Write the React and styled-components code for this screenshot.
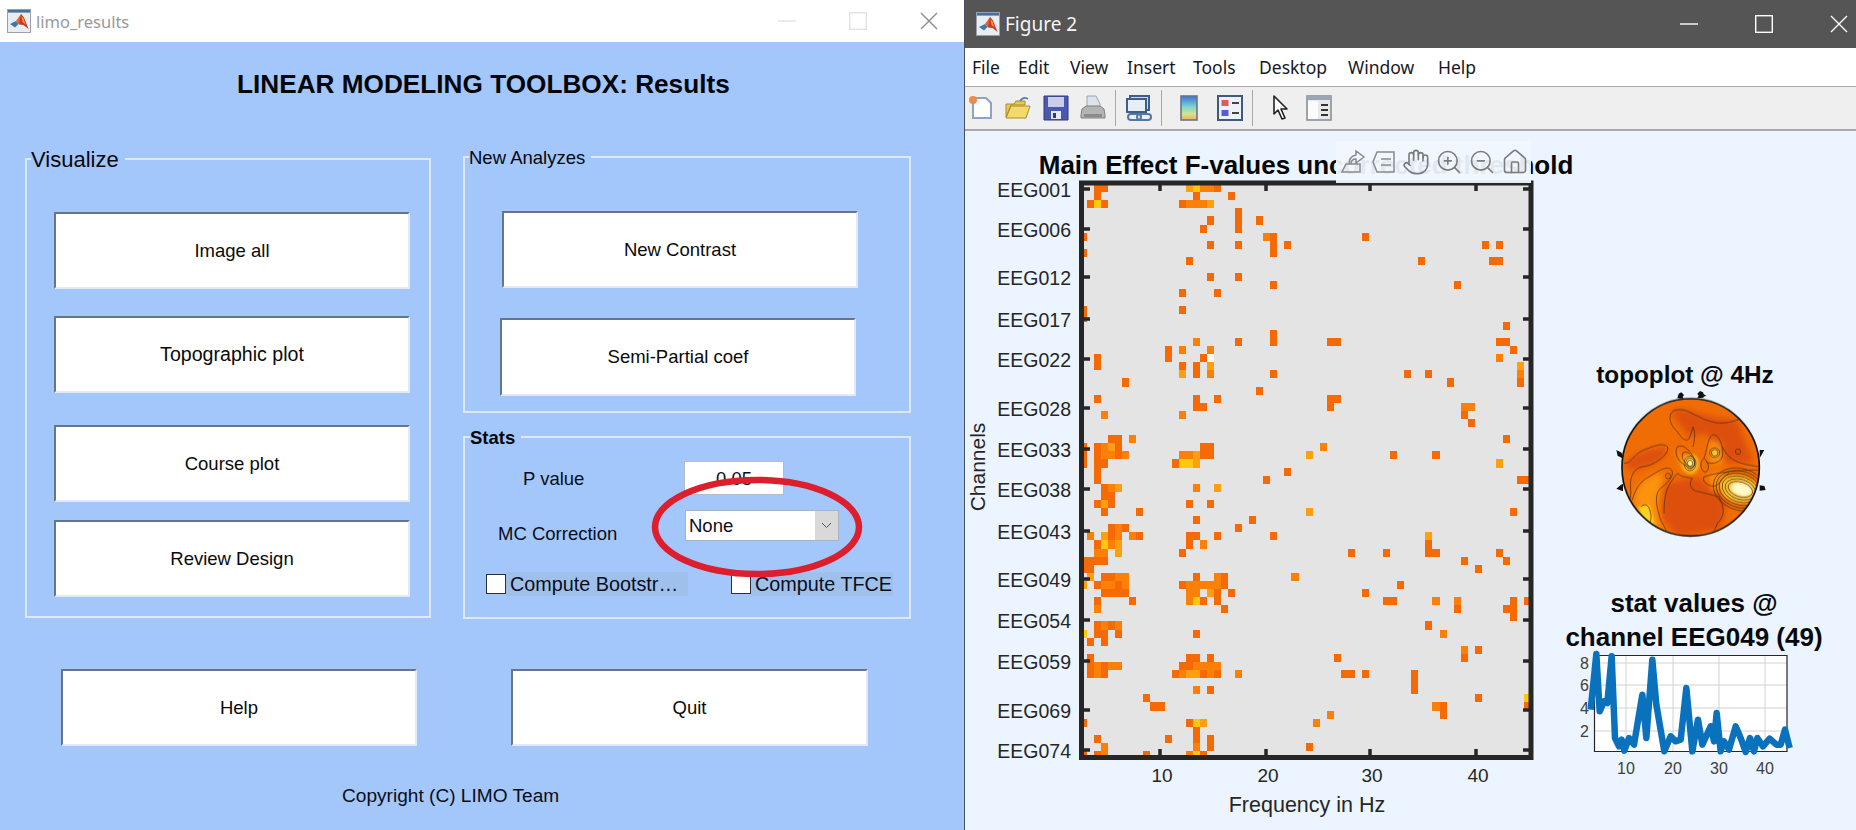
import React from 'react'
import styled, { createGlobalStyle } from 'styled-components'
import { Hand, ZoomIn, ZoomOut, House } from 'lucide-react'

const Global = createGlobalStyle`
  html, body { margin: 0; padding: 0; background: #fff; }
  * { box-sizing: border-box; }
`

const Screen = styled.div`
  display: flex;
  width: 1856px;
  height: 830px;
  overflow: hidden;
  font-family: "Liberation Sans", Arial, sans-serif;
`

/* ---------- window chrome ---------- */

const LeftWindow = styled.div`
  position: relative;
  display: flex;
  flex-direction: column;
  width: 964px;
  height: 830px;
  background: #a3c6fb;
`

const RightWindow = styled.div`
  display: flex;
  flex-direction: column;
  width: 892px;
  height: 830px;
  border-left: 1px solid #48505c;
  background: #ebf4ff;
`

const TitleBar = styled.div`
  display: flex;
  align-items: center;
  flex: none;
  height: ${p => p.$height}px;
  padding-left: ${p => p.$pad}px;
  background: ${p => p.$bg};
`

const WindowTitle = styled.span`
  margin-left: 5px;
  font-family: "Noto Sans", sans-serif;
  font-size: ${p => p.$size}px;
  color: ${p => p.$color};
`

const Controls = styled.div`
  display: flex;
  margin-left: auto;
  margin-right: ${p => p.$right}px;
  gap: ${p => p.$gap}px;
`

const ControlIcon = styled.svg`
  display: block;
  width: 18px;
  height: 18px;
  fill: none;
  stroke: ${p => p.$color};
  stroke-width: ${p => p.$w || 1.4};
`

const WinButtons = ({ colors, gap, right }) => (
  <Controls $gap={gap} $right={right}>
    <ControlIcon viewBox="0 0 18 18" $color={colors[0]}><path d="M0 9h18" /></ControlIcon>
    <ControlIcon viewBox="0 0 18 18" $color={colors[1]}><rect x="0.7" y="0.7" width="16.6" height="16.6" /></ControlIcon>
    <ControlIcon viewBox="0 0 18 18" $color={colors[2]}><path d="M1 1l16 16M17 1L1 17" /></ControlIcon>
  </Controls>
)

const MatlabIcon = () => (
  <svg width="24" height="24" viewBox="0 0 24 24">
    <rect x="0.5" y="0.5" width="23" height="23" fill="#e9edf2" stroke="#98a2ac" />
    <rect x="1" y="1" width="22" height="2.6" fill="#456f9f" />
    <path d="M3 15l6-3 2.5 3L8 18.5z" fill="#3f78a8" />
    <path d="M9 12l5-7 2 3-4 7.5z" fill="#e0662a" />
    <path d="M14 5l3 3.5 4.5 11.5-5-4-4.5-.5z" fill="#c8382a" />
    <path d="M14.5 7l2 2.5 2 6-3-2.5z" fill="#f09a3c" />
  </svg>
)

/* ---------- left window: limo_results ---------- */

const Heading = styled.h1`
  margin: 0;
  padding: 28px 0 0 237px;
  height: 116px;
  font-size: 26.2px;
  line-height: 28px;
  font-weight: 700;
  color: #05060a;
  white-space: nowrap;
`

const PanelRow = styled.div`
  display: flex;
  padding-left: 25px;
  gap: 32px;
`

const PanelColumn = styled.div`
  display: flex;
  flex-direction: column;
  gap: 23px;
  margin-top: -2px;
`

const Panel = styled.div`
  position: relative;
  width: ${p => p.$w}px;
  height: ${p => p.$h}px;
  border: 2px solid #dfe9f6;
  padding-left: ${p => p.$pad || 0}px;
`

const Legend = styled.span`
  position: absolute;
  left: ${p => p.$left}px;
  top: ${p => p.$top}px;
  padding-right: 6px;
  background: #a3c6fb;
  font-size: ${p => p.$size}px;
  font-weight: ${p => (p.$bold ? 700 : 400)};
  line-height: 26px;
  color: #06080e;
`

const PushButton = styled.button`
  display: block;
  width: ${p => p.$w || 356}px;
  height: ${p => p.$h || 77}px;
  margin-top: ${p => p.$top || 0}px;
  margin-left: ${p => p.$left || 0}px;
  padding: 0;
  background: #fff;
  border-style: solid;
  border-width: 2px;
  border-color: #66748e #e3e9f2 #e3e9f2 #66748e;
  border-radius: 0;
  font-family: inherit;
  font-size: ${p => p.$size || 18.5}px;
  color: #0a0a0a;
`

const StatRow = styled.div`
  display: flex;
  align-items: flex-start;
  height: ${p => p.$h}px;
  margin-top: ${p => p.$top}px;
  padding-left: ${p => p.$pad}px;
  font-size: 18.5px;
  color: #0a0e18;
`

const StatLabel = styled.span`
  width: ${p => p.$w}px;
  padding-top: ${p => p.$top}px;
  line-height: 24px;
`

const NumberField = styled.div`
  width: 100px;
  height: 34px;
  background: #fff;
  border: 1px solid #b4bcc8;
  text-align: center;
  line-height: 33px;
`

const SelectField = styled.div`
  display: flex;
  width: 154px;
  height: 31px;
  background: #fff;
  border: 1px solid #aab2be;
  line-height: 29px;
  padding-left: 3px;
`

const SelectArrow = styled.span`
  display: flex;
  align-items: center;
  justify-content: center;
  width: 23px;
  margin-left: auto;
  background: #d9d9d9;
`

const CheckItem = styled.label`
  display: flex;
  align-items: center;
  width: ${p => p.$w}px;
  margin-left: ${p => p.$left || 0}px;
  height: 24px;
`

const CheckBox = styled.span`
  flex: none;
  width: 20px;
  height: 20px;
  background: #fff;
  border: 1px solid #2c2f38;
`

const CheckText = styled.span`
  flex: 1;
  padding-left: 4px;
  background: #a0c0ec;
  font-size: 19.8px;
  line-height: 24px;
  white-space: nowrap;
  overflow: hidden;
`

const BottomRow = styled.div`
  display: flex;
  margin-top: 50px;
  padding-left: 61px;
  gap: 94px;
`

const Copyright = styled.div`
  margin-top: 38px;
  padding-left: 342px;
  font-size: 19.1px;
  line-height: 24px;
  color: #0a0e18;
`

const RedCircle = styled.svg`
  position: absolute;
  left: 648px;
  top: 472px;
  width: 220px;
  height: 110px;
  fill: none;
  stroke: #dc1e2d;
  stroke-width: 6.5px;
  pointer-events: none;
`

/* ---------- right window: Figure 2 ---------- */

const MenuBar = styled.div`
  display: flex;
  flex: none;
  align-items: center;
  height: 38px;
  padding-left: 7px;
  background: #fff;
  font-family: "Noto Sans", sans-serif;
  font-size: 17.5px;
  color: #14181f;
`

const MenuItem = styled.span`
  width: ${p => p.$w}px;
`

const ToolBar = styled.div`
  display: flex;
  flex: none;
  align-items: center;
  height: 45px;
  padding-left: 3px;
  background: #efefef;
  border-top: 1px solid #ababab;
  border-bottom: 2px solid #a8a8a8;
`

const ToolIcon = styled.svg`
  flex: none;
  width: 26px;
  height: 26px;
  margin-left: ${p => p.$left || 0}px;
`

const ToolSep = styled.span`
  flex: none;
  width: 1px;
  height: 36px;
  margin-left: ${p => p.$left}px;
  background: #a9a9a9;
`

const FigureBody = styled.div`
  position: relative;
  display: flex;
  flex: 1;
  min-height: 0;
`

const AxesToolbar = styled.div`
  position: absolute;
  left: 371px;
  top: 10px;
  display: flex;
  align-items: center;
  gap: 5px;
  width: 195px;
  height: 42px;
  padding-left: 4px;
  background: rgba(240, 246, 254, 0.94);
  color: #7c7c7c;
`

const HeatSvg = styled.svg`
  display: block;
  flex: none;
  overflow: visible;
`

const AxisText = styled.text`
  font-family: "Liberation Sans", Arial, sans-serif;
  font-size: ${p => p.$size}px;
  font-weight: ${p => (p.$bold ? 700 : 400)};
  fill: ${p => p.$color || '#262626'};
  text-anchor: ${p => p.$anchor || 'middle'};
`

const SideColumn = styled.div`
  display: flex;
  flex-direction: column;
  align-items: center;
  width: 270px;
  padding-top: 231px;
`

const PlotTitle = styled.div`
  font-size: ${p => p.$size}px;
  font-weight: 700;
  line-height: ${p => p.$line}px;
  margin-top: ${p => p.$top || 0}px;
  margin-bottom: ${p => p.$bottom || 0}px;
  margin-left: ${p => p.$shift || 0}px;
  text-align: center;
  white-space: nowrap;
  color: #08090c;
`

const TopoSvg = styled.svg`
  display: block;
  flex: none;
  width: 165px;
  height: 155px;
  margin-top: 2px;
  margin-left: -6px;
`

const StatSvg = styled.svg`
  display: block;
  flex: none;
  overflow: visible;
`

/* heat map cells, row -> columns, letter is how hot the cell is */
const HEAT = {
  1: '2 3 15b 16c 17a 18a 19', 2: '2 16 21', 3: '1 2c 3 14 15a 16a 17a 18b', 4: '22',
  5: '22 18 25', 6: '22 17', 7: '0 26a 27 40', 8: '18 22 27 29 57 59', 9: '0 27',
  10: '15 48 58 59', 12: '18 22', 13: '27 53', 14: '14 19', 16: '14 0', 17: '0', 18: '60',
  19: '27', 20: '27 16a 22 35 36 59 60', 21: '12 14a 18a 61', 22: '12 17 18w 2 59a',
  23: '2 14 16 18b 62b', 24: '14b 16 18a 27 46 49 62a', 25: '6 52 62', 26: '25',
  27: '2 16 19 35 36', 28: '16 17 35 54a 55a', 29: '3a 14a 54', 30: '55',
  32: '4 5 7a 60', 33: '0 2 3a 4b 5 17 18 34a', 34: '0 2 3a 4a 5 6a 14a 15a 16b 17 18 32b 44 50',
  35: '0 2 3 13 14c 15c 16b 59b', 36: '2 29', 37: '2 26 62 63', 38: '3 4a 5b 16a 19b',
  39: '3 4', 40: '2 3b 4 15 18', 41: '3 8 32b 61', 42: '16 24', 43: '4 5a 6 22',
  44: '1a 3b 4 5a 7a 8 15 16 19 27 49b', 45: '2 3c 4a 5b 15 17a 49',
  46: '2a 3a 5b 14 38 43 49 50 59', 47: '0 1 2 3 54 60', 48: '0 1 56',
  49: '1b 3 4 5a 6a 16 19a 20 30a', 50: '0b 2 3a 4a 5 6a 14 15a 16a 17a 18a 19a 20 45',
  51: '3 4 5 6 15a 16a 18b 19 21 40', 52: '2 7 15a 16c 17 19 43 44 50a 53a 61 63',
  53: '2a 20 53 60 61', 54: '61', 55: '2 3a 4 5a 49', 56: '0c 2 3 5 16 51a', 57: '1 3',
  58: '54a 56', 59: '1 15 16 18 36 54', 60: '1 2a 3 4a 5a 14 15 16a 17a 18a 19a',
  61: '1 2a 3 13 14a 15b 16b 17 18a 19 22a 37 38 40 47', 62: '47',
  63: '16a 18 47', 64: '9 56 63c', 65: '10 11 50a 51 63', 66: '35a 51',
  67: '0 15 16c 17b 33a', 68: '16', 69: '2 12 16 18', 70: '3a 16a 18 32', 71: '0 2 3a 9 15a 16c 17'
}
const HEAT_COLORS = { n: '#f56a05', a: '#fa8008', b: '#fd9f0e', c: '#ffc70f', w: '#fff9e6' }

const heatCells = Object.entries(HEAT).flatMap(([row, cols]) =>
  cols.split(' ').map(token => ({
    row: Number(row),
    col: parseInt(token, 10),
    color: HEAT_COLORS[token.replace(/\d/g, '') || 'n']
  }))
)

const CHANNELS = [
  ['EEG001', 190], ['EEG006', 230], ['EEG012', 278], ['EEG017', 320], ['EEG022', 360],
  ['EEG028', 409], ['EEG033', 450], ['EEG038', 490], ['EEG043', 532], ['EEG049', 580],
  ['EEG054', 621], ['EEG059', 662], ['EEG069', 711], ['EEG074', 751]
]
const FREQ_TICKS = [[1161, 10], [1267, 20], [1371, 30], [1477, 40]]

const HeatMap = () => (
  <HeatSvg width="594" height="699" viewBox="966 131 594 699">
    <defs>
      <clipPath id="heat-clip"><rect x="1085" y="185" width="445" height="570" /></clipPath>
    </defs>
    <AxisText x="1307" y="174" $size={26} $bold $color="#050505">Main Effect F-values uncorrected threshold</AxisText>
    <rect x="1085" y="185" width="445" height="570" fill="#e4e4e4" />
    <g clipPath="url(#heat-clip)" shapeRendering="crispEdges">
      {heatCells.map(c => (
        <rect
          key={`${c.row}-${c.col}`}
          x={1088 + 7.05 * (c.col - 1)}
          y={184 + 8.1 * (c.row - 1)}
          width="7.05"
          height="8.1"
          fill={c.color}
        />
      ))}
    </g>
    <rect x="1082.5" y="183" width="449.5" height="574.5" fill="none" stroke="#262626" strokeWidth="5" />
    {CHANNELS.map(([name, y]) => (
      <g key={name}>
        <path d={`M1085 ${y - 1}h6M1530 ${y - 1}h-6`} stroke="#262626" strokeWidth="3.5" />
        <AxisText x="1072" y={y + 7} $size={19.5} $anchor="end">{name}</AxisText>
      </g>
    ))}
    {FREQ_TICKS.map(([x, label]) => (
      <g key={label}>
        <path d={`M${x} 185v6M${x} 755v-6`} stroke="#262626" strokeWidth="3.5" />
        <AxisText x={x + 2} y="782" $size={19}>{label}</AxisText>
      </g>
    ))}
    <AxisText x="1308" y="812" $size={21.5}>Frequency in Hz</AxisText>
    <AxisText transform="translate(986 467) rotate(-90)" $size={21}>Channels</AxisText>
  </HeatSvg>
)

const Topoplot = () => (
  <TopoSvg viewBox="0 0 495 465">
    <defs>
      <clipPath id="head-clip"><circle cx="245" cy="232" r="204" /></clipPath>
      <filter id="soft"><feGaussianBlur stdDeviation="9" /></filter>
      <filter id="softer"><feGaussianBlur stdDeviation="4" /></filter>
    </defs>
    <g fill="#111">
      <path d="M205 25l4-14 8-4 8 8-4 6 2 6zM265 25l4-8-4-6 8-8 9 4 2 6 8 4-8 3-1 3z" />
      <path d="M22 180l16 8 4 18-10-6-6-2zM22 296l14-12 6-2 0 22-10-4zM452 180l14 0-8 14-6 10zM452 286l14 2 4 12-18 2z" />
    </g>
    <circle cx="245" cy="232" r="206" fill="#f06d05" />
    <g clipPath="url(#head-clip)">
      <g filter="url(#soft)" fill="#dd4f10">
        <path d="M185 65c30-25 60 10 200 25l50 130-85 0-60-90-50 10z" />
        <path d="M50 220c20-30 120-60 125-40 5 20-60 60-120 60z" />
        <path d="M165 280l100-20 90 70-20 90-130 20-50-60z" />
      </g>
      <g filter="url(#soft)" fill="#fb9310">
        <path d="M75 340c0-50 40-90 90-90l-20 90 10 100-70-30z" />
        <path d="M300 250l60 0-10 40-40 10z" />
        <path d="M200 180l50 40 10 30-40-10z" />
        <path d="M300 150l35 10 5 60-35 5z" />
      </g>
      <g filter="url(#softer)">
        <path d="M90 350l30-6 20 70-40-10z" fill="#ffd21e" />
        <ellipse cx="245" cy="222" rx="26" ry="30" fill="#fdb31a" />
        <ellipse cx="245" cy="220" rx="12" ry="14" fill="#fff28a" />
        <ellipse cx="392" cy="298" rx="60" ry="42" fill="#fcc433" transform="rotate(15 392 298)" />
        <ellipse cx="398" cy="298" rx="32" ry="20" fill="#fffac8" transform="rotate(15 398 298)" />
        <ellipse cx="318" cy="190" rx="12" ry="14" fill="#ffc43c" />
      </g>
      <g fill="none" stroke="#4a2a10" strokeWidth="2">
        <path d="M390 88c-30 10-65 22-120-8-30-12-40-25-70-20-25 8-20 40 0 60 15 15 18 30 34 30 8 0 12-20 18-40 8 20 5 40 0 60" />
        <path d="M45 220c25 0 30-30 60-40 20-8 55-25 70-10 10 15-30 55-75 60-25 5-40 30-35 70 2 25-5 40-15 50" />
        <path d="M70 330c10-40 30-60 50-70 25-15 60-40 70-15 5 20-30 45-40 55-15 20-5 60 5 90 10 20 20 30 30 75" />
        <path d="M205 170c-10 20 0 45 30 60 20 15 25-10 20-25-10-20-30-45-50-35z" />
        <path d="M222 188c-8 14 5 32 18 40 16 8 22-8 14-22-6-10-20-25-32-18z" />
        <ellipse cx="243" cy="220" rx="18" ry="22" />
        <ellipse cx="243" cy="220" rx="13" ry="16" />
        <ellipse cx="243" cy="220" rx="8" ry="10" />
        <path d="M285 205c8-20 10-60 25-70 20-5 35 35 30 65-5 20-40 25-50 15M285 205c-15 10-10 35 0 40 15 5 20-25 0-40z" />
        <circle cx="317" cy="188" r="10" />
        <circle cx="317" cy="188" r="15" />
        <circle cx="387" cy="185" r="8" />
        <circle cx="177" cy="258" r="8" />
        <path d="M340 170c15 30 30 50 110 60M450 240c-50 0-120 5-165 20-10 20 30 40 45 20 10-10 15-25 30-30" />
        <path d="M165 370c0-60 10-85 40-120 20 15 30 10 45 15-15 20 0 40 20 40l60 15c20 40 15 60-5 80-10 30-20 30-25 40" />
        <path d="M95 350c15-12 25-5 30 20 5 25-10 50-20 40" />
        {[0, 9, 18, 27, 36, 45].map(d => (
          <ellipse key={d} cx="394" cy="298" rx={38 + d} ry={22 + d * 0.9} transform="rotate(18 394 298)" />
        ))}
      </g>
    </g>
    <circle cx="245" cy="232" r="206" fill="none" stroke="#111" strokeWidth="5" />
  </TopoSvg>
)

const STAT_TRACE = [
  [155, 425], [172, 258], [182, 430], [195, 400], [205, 405], [218, 265], [228, 510], [240, 535], [248, 515],
  [256, 548], [270, 510], [285, 530], [310, 380], [322, 510], [340, 275], [352, 410], [376, 550], [395, 505],
  [410, 520], [425, 515], [442, 360], [460, 550], [477, 455], [490, 530], [515, 475], [525, 520], [533, 435],
  [545, 550], [555, 520], [570, 545], [590, 475], [605, 510], [620, 552], [633, 510], [645, 550], [655, 510],
  [672, 535], [692, 512], [712, 530], [725, 530], [738, 485], [752, 540]
]
const tracePoints = STAT_TRACE.map(([x, y]) => `${1540 + x / 3},${570 + y / 3}`).join(' ')
const STAT_X = [[1627, 10], [1674, 20], [1720, 30], [1766, 40]]
const STAT_Y = [[665, 8], [687, 6], [710, 4], [733, 2]]

const StatPlot = () => (
  <StatSvg width="270" height="140" viewBox="1560 650 270 140">
    <rect x="1595" y="657" width="193" height="96" fill="#fff" />
    <g stroke="#d2d2d2" strokeWidth="1">
      {STAT_X.map(([x]) => <path key={x} d={`M${x} 657v96`} />)}
      {STAT_Y.map(([y]) => <path key={y} d={`M1595 ${y}h193`} />)}
    </g>
    <path d="M1595.5 657v96.5h192.5V657.5H1595.5" fill="none" stroke="#262626" strokeWidth="1.2" />
    <polyline points={tracePoints} fill="none" stroke="#0a72bd" strokeWidth="6.5" strokeLinejoin="round" />
    {STAT_Y.map(([y, label]) => (
      <AxisText key={label} x="1590" y={y + 6} $size={16} $anchor="end" $color="#404040">{label}</AxisText>
    ))}
    {STAT_X.map(([x, label]) => (
      <AxisText key={label} x={x} y="776" $size={16} $color="#404040">{label}</AxisText>
    ))}
  </StatSvg>
)

const Chevron = () => (
  <svg width="11" height="7" viewBox="0 0 11 7" fill="none" stroke="#555" strokeWidth="1"><path d="M1 1l4.5 4.5L10 1" /></svg>
)

const ToolbarIcons = () => (
  <>
    <ToolIcon viewBox="0 0 26 26">
      <path d="M5 3h13l5 5v15H5z" fill="#fdfdfd" stroke="#8ea3bd" strokeWidth="2" />
      <circle cx="5" cy="5" r="4" fill="#ee8a4a" />
    </ToolIcon>
    <ToolIcon viewBox="0 0 26 26" $left={11}>
      <path d="M1 9h8l2-3h9v4H6L1 22z" fill="#e8c84e" stroke="#a88c30" />
      <path d="M1 23l5-12h19l-4 12z" fill="#f4d96b" stroke="#a88c30" />
      <path d="M15 6c2-3 5-4 8-2" fill="none" stroke="#5a7ea8" strokeWidth="1.6" />
    </ToolIcon>
    <ToolIcon viewBox="0 0 26 26" $left={12}>
      <path d="M1 1h24v24H1z" fill="#4a58b0" stroke="#2f3a80" />
      <rect x="5" y="2" width="16" height="10" fill="#c8cdea" />
      <rect x="8" y="16" width="10" height="8" fill="#e8e8f0" />
      <rect x="10" y="18" width="3" height="5" fill="#2f3a80" />
    </ToolIcon>
    <ToolIcon viewBox="0 0 26 26" $left={11}>
      <path d="M7 1h9l4 8v6H7z" fill="#dce3ea" stroke="#9aa6b2" />
      <path d="M2 14l4-3h14l4 3 1 6v3H1v-3z" fill="#b4b4b4" stroke="#808080" />
      <rect x="4" y="19" width="18" height="3" fill="#8c8c8c" />
    </ToolIcon>
    <ToolSep $left={9} />
    <ToolIcon viewBox="0 0 26 26" $left={10}>
      <rect x="4" y="1" width="19" height="14" fill="#cfdbe9" stroke="#3d5f8a" strokeWidth="2" />
      <rect x="1" y="4" width="19" height="13" fill="#e8eef5" stroke="#3d5f8a" strokeWidth="2" />
      <rect x="2" y="19" width="13" height="6" rx="3" fill="none" stroke="#4f78a8" strokeWidth="2" />
      <rect x="11" y="19" width="14" height="6" rx="3" fill="none" stroke="#4f78a8" strokeWidth="2" />
    </ToolIcon>
    <ToolSep $left={9} />
    <ToolIcon viewBox="0 0 26 26" $left={14}>
      <defs>
        <linearGradient id="cbar" x1="0" y1="0" x2="0" y2="1">
          <stop offset="0" stopColor="#3f6fd8" />
          <stop offset="0.45" stopColor="#7cd6d0" />
          <stop offset="0.75" stopColor="#d6e28a" />
          <stop offset="1" stopColor="#f2b060" />
        </linearGradient>
      </defs>
      <rect x="5" y="1" width="16" height="24" fill="url(#cbar)" stroke="#6a7688" strokeWidth="1.6" />
    </ToolIcon>
    <ToolIcon viewBox="0 0 26 26" $left={15}>
      <rect x="1" y="1" width="24" height="24" fill="#eef1f6" stroke="#3f5a80" strokeWidth="2" />
      <rect x="4.5" y="5" width="7" height="6" fill="#e05a5a" />
      <rect x="4.5" y="15" width="7" height="6" fill="#5a5ae0" />
      <path d="M15 8h7M15 18h7" stroke="#444" strokeWidth="2" />
    </ToolIcon>
    <ToolSep $left={9} />
    <ToolIcon viewBox="0 0 26 26" $left={13}>
      <path d="M8 1v18l4-4 4 9 3-1-4-9h6z" fill="#fdfdfd" stroke="#222" strokeWidth="1.6" strokeLinejoin="round" />
    </ToolIcon>
    <ToolIcon viewBox="0 0 26 26" $left={14}>
      <rect x="1" y="1" width="24" height="24" fill="#e6e8ea" stroke="#8a9098" strokeWidth="1.6" />
      <rect x="1" y="1" width="24" height="4" fill="#9aa6b4" />
      <rect x="2" y="6" width="10" height="18" fill="#fbfbfb" />
      <path d="M15 10h7M15 15h7M15 20h7" stroke="#333" strokeWidth="2" />
    </ToolIcon>
  </>
)

const AxesIcons = () => (
  <AxesToolbar>
    <svg width="26" height="26" viewBox="0 0 26 26" fill="none" stroke="#8a8a8a" strokeWidth="1.5">
      <path d="M2 23l4-8h14v8zM9 15c0-5 3-8 7-9V2l8 6-8 6v-4c-3 0-5 2-5 5" />
    </svg>
    <svg width="26" height="26" viewBox="0 0 26 26" fill="none" stroke="#8a8a8a" strokeWidth="1.5">
      <path d="M6 3h17v20H6l-4-10zM10 10h10M10 16h10" />
    </svg>
    <Hand size={28} strokeWidth={1.4} />
    <ZoomIn size={28} strokeWidth={1.4} />
    <ZoomOut size={28} strokeWidth={1.4} />
    <House size={28} strokeWidth={1.4} />
  </AxesToolbar>
)

export default function App() {
  return (
    <Screen>
      <Global />
      <LeftWindow>
        <TitleBar $height={42} $pad={7} $bg="#fff">
          <MatlabIcon />
          <WindowTitle $size={16.5} $color="#999">limo_results</WindowTitle>
          <WinButtons colors={['#e2e2e2', '#e2e2e2', '#8a8a8a']} gap={53} right={26} />
        </TitleBar>
        <Heading>LINEAR MODELING TOOLBOX: Results</Heading>
        <PanelRow>
          <Panel $w={406} $h={460} $pad={27}>
            <Legend $left={4} $top={-13} $size={22}>Visualize</Legend>
            <PushButton $top={52}>Image all</PushButton>
            <PushButton $top={27} $size={19.6}>Topographic plot</PushButton>
            <PushButton $top={32}>Course plot</PushButton>
            <PushButton $top={18}>Review Design</PushButton>
          </Panel>
          <PanelColumn>
            <Panel $w={448} $h={257}>
              <Legend $left={4} $top={-13} $size={18.5}>New Analyzes</Legend>
              <PushButton $top={53} $left={37}>New Contrast</PushButton>
              <PushButton $top={30} $left={35} $h={78}>Semi-Partial coef</PushButton>
            </Panel>
            <Panel $w={448} $h={183}>
              <Legend $left={5} $top={-13} $size={18.5} $bold>Stats</Legend>
              <StatRow $h={34} $top={23} $pad={58}>
                <StatLabel $w={161} $top={6}>P value</StatLabel>
                <NumberField>0.05</NumberField>
              </StatRow>
              <StatRow $h={31} $top={15} $pad={33}>
                <StatLabel $w={187} $top={12}>MC Correction</StatLabel>
                <SelectField>
                  None
                  <SelectArrow><Chevron /></SelectArrow>
                </SelectField>
              </StatRow>
              <StatRow $h={24} $top={31} $pad={21}>
                <CheckItem $w={202}>
                  <CheckBox />
                  <CheckText>Compute Bootstr…</CheckText>
                </CheckItem>
                <CheckItem $w={162} $left={43}>
                  <CheckBox />
                  <CheckText>Compute TFCE</CheckText>
                </CheckItem>
              </StatRow>
            </Panel>
          </PanelColumn>
        </PanelRow>
        <BottomRow>
          <PushButton>Help</PushButton>
          <PushButton $w={357}>Quit</PushButton>
        </BottomRow>
        <Copyright>Copyright (C) LIMO Team</Copyright>
        <RedCircle viewBox="0 0 220 110">
          <ellipse cx="109" cy="55" rx="102" ry="47" />
        </RedCircle>
      </LeftWindow>
      <RightWindow>
        <TitleBar $height={48} $pad={11} $bg="#555">
          <MatlabIcon />
          <WindowTitle $size={19} $color="#f6f6f6">Figure 2</WindowTitle>
          <WinButtons colors={['#fff', '#fff', '#fff']} gap={57} right={8} />
        </TitleBar>
        <MenuBar>
          <MenuItem $w={46}>File</MenuItem>
          <MenuItem $w={52}>Edit</MenuItem>
          <MenuItem $w={57}>View</MenuItem>
          <MenuItem $w={66}>Insert</MenuItem>
          <MenuItem $w={66}>Tools</MenuItem>
          <MenuItem $w={89}>Desktop</MenuItem>
          <MenuItem $w={90}>Window</MenuItem>
          <MenuItem $w={50}>Help</MenuItem>
        </MenuBar>
        <ToolBar><ToolbarIcons /></ToolBar>
        <FigureBody>
          <AxesIcons />
          <HeatMap />
          <SideColumn>
            <PlotTitle $size={24.3} $line={26} $shift={-18}>topoplot @ 4Hz</PlotTitle>
            <Topoplot />
            <PlotTitle $size={26} $line={34} $top={41} $bottom={-6}>stat values @<br />channel EEG049 (49)</PlotTitle>
            <StatPlot />
          </SideColumn>
        </FigureBody>
      </RightWindow>
    </Screen>
  )
}
